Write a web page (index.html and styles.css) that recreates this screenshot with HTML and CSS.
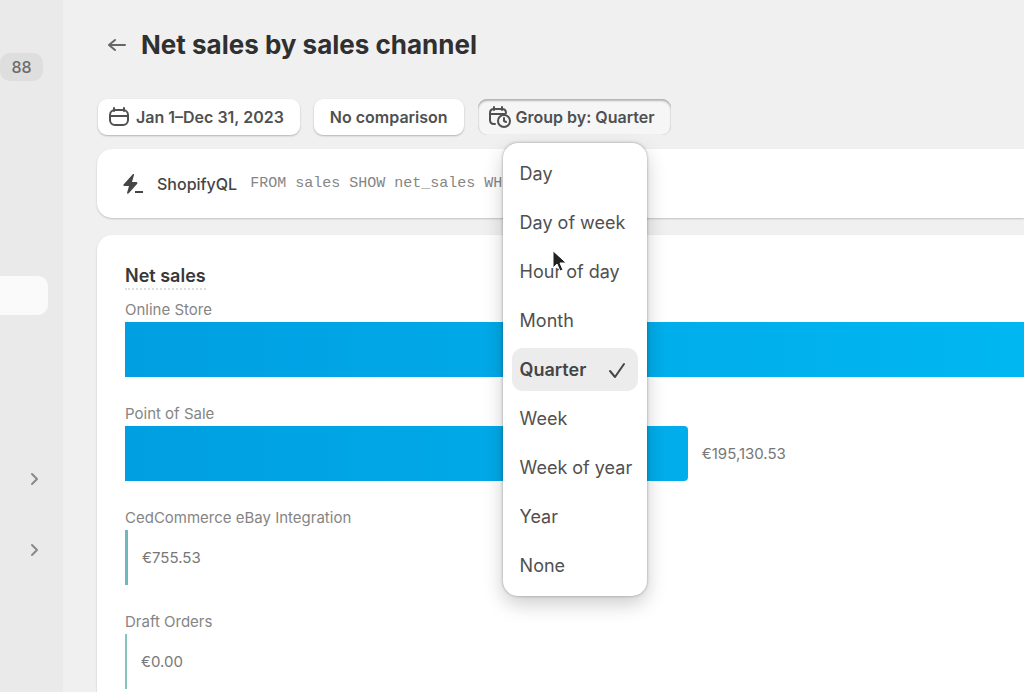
FILE: index.html
```
<!DOCTYPE html>
<html lang="en">
  <head>
    <meta charset="UTF-8" />
    <meta name="viewport" content="width=device-width, initial-scale=1.0" />
    <title>Net sales by sales channel</title>
    <link rel="stylesheet" href="styles.css">
  </head>
  <body>
    <div class="app">
      <nav class="sidebar" aria-label="Main navigation">
        <a href="#" class="nav-row nav-orders"><span class="badge">88</span></a>
        <a href="#" class="nav-row nav-active" aria-label="Reports"></a>
        <a href="#" class="nav-row nav-section" aria-label="Sales channels">
          <svg width="12" height="16" viewBox="0 0 12 16"><path d="M4 3l5 5-5 5" /></svg>
        </a>
        <a href="#" class="nav-row nav-section" aria-label="Apps">
          <svg width="12" height="16" viewBox="0 0 12 16"><path d="M4 3l5 5-5 5" /></svg>
        </a>
      </nav>

      <main class="main">
        <header class="page-header">
          <a href="#" class="back" aria-label="Back">
            <svg width="20" height="16" viewBox="0 0 20 16"><path d="M18 8H2M8 3L2 8l6 5" /></svg>
          </a>
          <h1>Net sales by sales channel</h1>
        </header>

        <div class="filters">
          <button type="button" class="filter">
            <svg width="20" height="20" viewBox="0 0 20 20">
              <rect x="1" y="3" width="18" height="15" rx="5" />
              <path d="M1 9h18M5 1v3M15 1v3" />
            </svg>
            Jan 1–Dec 31, 2023
          </button>
          <button type="button" class="filter">No comparison</button>
          <div class="group-by">
            <button type="button" class="filter pressed" aria-expanded="true">
              <svg width="22" height="22" viewBox="0 0 22 22">
                <path d="M6 18H5c-2.500 0-4-1.500-4-4V7c0-2.500 1.500-4 4-4h8c2.500 0 4 1.500 4 4M1 8h15M5 1v3M13 1v3" />
                <circle cx="15" cy="15" r="6" />
                <path d="M15 12v3l2 1" />
              </svg>
              Group by: Quarter
            </button>
            <div class="menu" role="listbox" aria-label="Group by">
              <button type="button" role="option">Day</button>
              <button type="button" role="option">Day of week</button>
              <button type="button" role="option">Hour of day</button>
              <button type="button" role="option">Month</button>
              <button type="button" role="option" class="selected" aria-selected="true">
                Quarter
                <svg width="18" height="18" viewBox="0 0 18 18"><path d="M2 10l5 6L16 3" /></svg>
              </button>
              <button type="button" role="option">Week</button>
              <button type="button" role="option">Week of year</button>
              <button type="button" role="option">Year</button>
              <button type="button" role="option">None</button>
              <svg class="cursor" width="15" height="22" viewBox="0 0 15 22">
                <path d="M1 1v17l4-4 3 7 3-1-3-7h6z" />
              </svg>
            </div>
          </div>
        </div>

        <section class="card query">
          <svg width="22" height="20" viewBox="0 0 22 20">
            <path d="M11 0L2 10c-1 1-1 2 1 2h4l-2 7c0 1 1 1 2 0l8-9c1-1 0-2-1-2h-4l2-7c0-1 0-2-1-1z" />
            <path d="M13 17h8v2h-8z" />
          </svg>
          <span class="query-name">ShopifyQL</span>
          <code>FROM sales SHOW net_sales WH</code>
        </section>

        <section class="card chart">
          <h2>Net sales</h2>
          <div class="bar-row">
            <div class="bar-label">Online Store</div>
            <div class="bar-track"><div class="bar" style="width: 100%"></div></div>
          </div>
          <div class="bar-row">
            <div class="bar-label">Point of Sale</div>
            <div class="bar-track">
              <div class="bar rounded" style="width: 62.6%"></div>
              <span class="bar-value">€195,130.53</span>
            </div>
          </div>
          <div class="bar-row">
            <div class="bar-label">CedCommerce eBay Integration</div>
            <div class="bar-track">
              <div class="bar small"></div>
              <span class="bar-value">€755.53</span>
            </div>
          </div>
          <div class="bar-row">
            <div class="bar-label">Draft Orders</div>
            <div class="bar-track">
              <div class="bar zero"></div>
              <span class="bar-value">€0.00</span>
            </div>
          </div>
        </section>
      </main>
    </div>
  </body>
</html>
```
FILE: styles.css
```
* {
  box-sizing: border-box;
}
body {
  margin: 0;
  font-family: Inter, "Liberation Sans", sans-serif;
  color: #454545;
  background: #f0f0f0;
}
button {
  font: inherit;
  color: inherit;
  border: none;
  background: none;
  cursor: pointer;
}
svg {
  flex: none;
  fill: none;
  stroke: currentColor;
  stroke-width: 2;
  stroke-linecap: round;
  stroke-linejoin: round;
}
.app {
  display: flex;
  height: 100vh;
}

/* Sidebar */
.sidebar {
  flex: none;
  width: 63px;
  padding-top: 53px;
  background: #eaeaea;
}
.nav-row {
  display: flex;
  align-items: center;
  color: #8a8a8a;
  text-decoration: none;
}
.badge {
  width: 43px;
  height: 28px;
  border-radius: 10px;
  background: #dedede;
  color: #6b6b6b;
  font-size: 16px;
  font-weight: 500;
  line-height: 28px;
  text-align: center;
}
.nav-active {
  width: 48px;
  height: 39px;
  margin: 195px 0 128px;
  border-radius: 0 10px 10px 0;
  background: #fafafa;
}
.nav-section {
  height: 71px;
  padding-left: 28px;
}

/* Header and filters */
.main {
  flex: 1;
  min-width: 0;
  padding: 25px 0 0 34px;
  overflow: hidden;
}
.page-header {
  display: flex;
  align-items: center;
  gap: 14px;
  height: 39px;
  padding-left: 10px;
}
.back {
  display: flex;
  color: #666;
}
h1 {
  margin: 0;
  font-size: 26px;
  font-weight: 650;
  color: #303030;
}
.filters {
  display: flex;
  gap: 14px;
  margin: 35px 0 14px;
  padding-left: 1px;
}
.filter {
  display: flex;
  align-items: center;
  gap: 7px;
  height: 36px;
  padding: 0 16px 0 11px;
  border-radius: 9px;
  background: #fff;
  box-shadow: 0 1px 2px rgba(0, 0, 0, 0.25);
  font-size: 16px;
  font-weight: 600;
  color: #505050;
  white-space: nowrap;
}
.filter:nth-child(2) {
  padding: 0 16px;
}
.filter.pressed {
  gap: 5px;
  background: #f6f6f6;
  box-shadow: inset 0 2px 2px rgba(0, 0, 0, 0.25), inset 0 0 1px rgba(0, 0, 0, 0.3);
}
.group-by {
  position: relative;
}
.menu {
  position: absolute;
  z-index: 1;
  top: 44px;
  left: 25px;
  display: flex;
  flex-direction: column;
  gap: 6px;
  padding: 9px;
  border-radius: 15px;
  background: #fff;
  box-shadow: 0 0 3px rgba(0, 0, 0, 0.35), 0 8px 20px rgba(0, 0, 0, 0.2);
}
.menu button {
  display: flex;
  align-items: center;
  justify-content: space-between;
  height: 43px;
  padding: 0 6px 0 8px;
  border-radius: 11px;
  font-size: 18px;
  color: #505050;
  white-space: nowrap;
}
.menu .selected {
  padding-right: 12px;
  background: #ececec;
  font-weight: 600;
  color: #454545;
}
.cursor {
  position: absolute;
  top: 107px;
  left: 49px;
  fill: #222;
  stroke: #fff;
  stroke-width: 1;
}

/* Cards */
.card {
  border-radius: 15px 0 0 15px;
  background: #fff;
  box-shadow: 0 1px 2px rgba(0, 0, 0, 0.2);
}
.query {
  display: flex;
  align-items: center;
  height: 69px;
  margin-bottom: 17px;
  padding-left: 25px;
  white-space: nowrap;
}
.query svg {
  fill: currentColor;
  stroke: none;
}
.query-name {
  margin: 0 13px;
  font-size: 16px;
  font-weight: 500;
}
code {
  font-family: "Liberation Mono", monospace;
  font-size: 15px;
  color: #858585;
}
.chart {
  padding: 29px 0 24px 28px;
}
h2 {
  width: max-content;
  margin: 0 0 7px;
  border-bottom: 2px dotted #ddd;
  font-size: 18px;
  font-weight: 600;
  line-height: 24px;
  color: #383838;
}
.bar-row {
  margin-bottom: 24px;
}
.bar-label {
  font-size: 15px;
  line-height: 25px;
  color: #858585;
}
.bar-track {
  display: flex;
  align-items: center;
  gap: 14px;
  height: 55px;
}
.bar {
  height: 100%;
  background: linear-gradient(90deg, #009fe2, #00b7f1);
}
.bar.rounded {
  border-radius: 0 4px 4px 0;
  background: linear-gradient(90deg, #009fe2, #00aeeb);
}
.bar.small {
  width: 3px;
  background: #70b8c0;
}
.bar.zero {
  width: 2px;
  background: #85c4bd;
}
.bar-value {
  font-size: 15px;
  color: #777;
}
```
